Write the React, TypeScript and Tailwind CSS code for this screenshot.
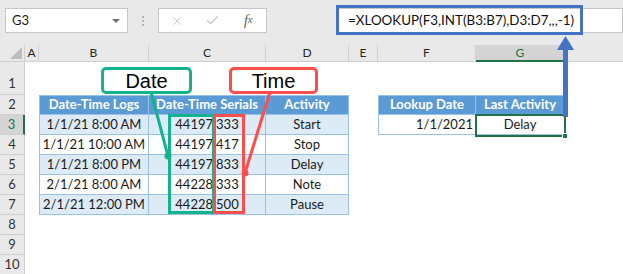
import { X, Check } from "lucide-react";

const logs = [
    ["1/1/21 8:00 AM", "44197.333", "Start"],
    ["1/1/21 10:00 AM", "44197.417", "Stop"],
    ["1/1/21 8:00 PM", "44197.833", "Delay"],
    ["2/1/21 8:00 AM", "44228.333", "Note"],
    ["2/1/21 12:00 PM", "44228.500", "Pause"],
];

const tblHead = "flex items-center justify-center border-r border-b border-t border-[#9bc2e6] bg-[#5b9bd5] font-bold text-white";
const tblCell = "flex items-center justify-center border-r border-b border-[#9bc2e6]";

function RowHead({ n, tall, active }: { n: number; tall?: boolean; active?: boolean }) {
    return (
        <div
            className={
                active
                    ? "flex w-[25px] shrink-0 items-center justify-center border-b border-r-2 border-b-[#cfcfcf] border-r-[#217346] bg-[#d4d4d4] text-[13px] text-[#217346]"
                    : tall
                    ? "flex w-[25px] shrink-0 items-end justify-center border-b border-r border-[#cfcfcf] bg-[#e9e9e9] pb-[1px] text-[13px] text-[#333]"
                    : "flex w-[25px] shrink-0 items-center justify-center border-b border-r border-[#cfcfcf] bg-[#e9e9e9] text-[13px] text-[#333]"
            }
        >
            {n}
        </div>
    );
}

export default function App() {
    return (
        <div className="relative h-[274px] w-[623px] overflow-hidden bg-white font-['Lato','Liberation_Sans',sans-serif] text-[#1a1a1a]">
            {/* Formula bar */}
            <div className="flex h-[45px] items-start bg-[#e9e9e9] pl-[5px] pt-[8px]">
                <div className="relative flex h-[25px] w-[123px] items-center border border-[#c6c6c6] bg-white pl-[6px] text-[13px]">
                    G3
                    <span className="absolute right-[7px] top-[10px] h-0 w-0 border-x-[4px] border-t-[4px] border-x-transparent border-t-[#707070]" />
                </div>
                <div className="flex h-[25px] w-[30px] flex-col items-center justify-center gap-[2px]">
                    <span className="h-[2px] w-[2px] bg-[#b3b3b3]" />
                    <span className="h-[2px] w-[2px] bg-[#b3b3b3]" />
                    <span className="h-[2px] w-[2px] bg-[#b3b3b3]" />
                </div>
                <div className="flex h-[25px] w-[109px] items-center border border-[#c6c6c6] bg-white">
                    <div className="flex w-[36px] justify-center">
                        <X className="h-[14px] w-[14px] text-[#c4c4c4]" strokeWidth={1.5} />
                    </div>
                    <div className="flex w-[36px] justify-center">
                        <Check className="h-[15px] w-[15px] text-[#c4c4c4]" strokeWidth={2} />
                    </div>
                    <div className="flex w-[36px] justify-center font-['Liberation_Serif',serif] text-[14px] italic text-[#5a5a5a]">
                        f<span className="text-[10px] leading-[20px]">x</span>
                    </div>
                </div>
                <div className="ml-[69px] flex h-[25px] flex-1 items-center border border-[#c6c6c6] bg-white pl-[11px] text-[13.4px] text-[#111]">
                    =XLOOKUP(F3,INT(B3:B7),D3:D7,,,-1)
                </div>
            </div>

            {/* Column headers */}
            <div className="flex h-[17px] bg-[#e9e9e9] text-[12px] text-[#262626]">
                <div className="relative w-[25px] shrink-0 border-r border-b border-[#cfcfcf]">
                    <span className="absolute bottom-[2px] right-[2px] h-0 w-0 border-b-[12px] border-l-[12px] border-b-[#bdbdbd] border-l-transparent" />
                </div>
                <div className="flex w-[14px] shrink-0 items-center justify-center border-r border-b border-[#cfcfcf]">A</div>
                <div className="flex w-[110px] shrink-0 items-center justify-center border-r border-b border-[#cfcfcf]">B</div>
                <div className="flex w-[117px] shrink-0 items-center justify-center border-r border-b border-[#cfcfcf]">C</div>
                <div className="flex w-[83px] shrink-0 items-center justify-center border-r border-b border-[#cfcfcf]">D</div>
                <div className="flex w-[29px] shrink-0 items-center justify-center border-r border-b border-[#cfcfcf]">E</div>
                <div className="flex w-[98px] shrink-0 items-center justify-center border-r border-b border-[#cfcfcf]">F</div>
                <div className="flex w-[89px] shrink-0 items-center justify-center border-r border-b-2 border-r-[#cfcfcf] border-b-[#217346] bg-[#d4d4d4] text-[#217346]">G</div>
                <div className="flex-1 border-b border-[#cfcfcf]" />
            </div>

            {/* Row 1 */}
            <div className="flex h-[33px]">
                <RowHead n={1} tall />
                <div className="flex-1" />
            </div>

            {/* Row 2: table headers */}
            <div className="flex h-[20px] text-[13px]">
                <RowHead n={2} />
                <div className="w-[14px] shrink-0" />
                <div className={`${tblHead} w-[110px] shrink-0 border-l`}>Date-Time Logs</div>
                <div className={`${tblHead} w-[117px] shrink-0`}>Date-Time Serials</div>
                <div className={`${tblHead} w-[83px] shrink-0`}>Activity</div>
                <div className="w-[29px] shrink-0" />
                <div className={`${tblHead} w-[98px] shrink-0 border-l`}>Lookup Date</div>
                <div className={`${tblHead} w-[89px] shrink-0`}>Last Activity</div>
            </div>

            {/* Rows 3-7 */}
            {logs.map((row, i) => (
                <div key={i} className="flex h-[20px] text-[13px]">
                    <RowHead n={i + 3} active={i === 0} />
                    <div className="w-[14px] shrink-0" />
                    <div className={`${tblCell} w-[110px] shrink-0 border-l ${i % 2 === 0 ? "bg-[#ddebf7]" : "bg-white"}`}>{row[0]}</div>
                    <div className={`${tblCell} w-[117px] shrink-0 ${i % 2 === 0 ? "bg-[#ddebf7]" : "bg-white"}`}>{row[1]}</div>
                    <div className={`${tblCell} w-[83px] shrink-0 ${i % 2 === 0 ? "bg-[#ddebf7]" : "bg-white"}`}>{row[2]}</div>
                    {i === 0 && (
                        <>
                            <div className="w-[29px] shrink-0" />
                            <div className={`${tblCell} w-[98px] shrink-0 justify-end border-l pr-[2px]`}>1/1/2021</div>
                            <div className={`${tblCell} w-[89px] shrink-0`}>Delay</div>
                        </>
                    )}
                </div>
            ))}

            {/* Rows 8-10 */}
            {[8, 9, 10].map((n) => (
                <div key={n} className="flex h-[20px]">
                    <RowHead n={n} />
                    <div className="flex-1" />
                </div>
            ))}

            {/* Annotations */}
            <svg className="pointer-events-none absolute left-0 top-0" width="623" height="274">
                <line x1="151" y1="92" x2="168" y2="156" stroke="#14b38f" strokeWidth="3" />
                <circle cx="168" cy="156" r="3.5" fill="#14b38f" />
                <line x1="270" y1="92" x2="245" y2="173" stroke="#fd4e4e" strokeWidth="3" />
                <circle cx="245" cy="173" r="3.5" fill="#fd4e4e" />
            </svg>

            <div className="absolute left-[168px] top-[114px] h-[100px] w-[47px] border-[3px] border-[#14b38f]" />
            <div className="absolute left-[213px] top-[114px] h-[100px] w-[32px] border-[3px] border-[#fd4e4e]" />

            <div className="absolute left-[101px] top-[67px] flex h-[27px] w-[91px] items-center justify-center rounded-[5px] border-[3px] border-[#14b38f] bg-white font-['Liberation_Sans',sans-serif] text-[20px] text-black">
                Date
            </div>
            <div className="absolute left-[229px] top-[67px] flex h-[27px] w-[89px] items-center justify-center rounded-[5px] border-[3px] border-[#fd4e4e] bg-white font-['Liberation_Sans',sans-serif] text-[20px] text-black">
                Time
            </div>

            {/* Selected cell G3 */}
            <div className="absolute left-[475px] top-[114px] h-[23px] w-[91px] border-2 border-[#217346]" />
            <div className="absolute left-[562px] top-[133px] h-[6px] w-[6px] border border-white bg-[#217346]" />

            {/* Formula highlight + arrow */}
            <div className="absolute left-[336px] top-[5px] h-[30px] w-[247px] border-[3px] border-[#4472c4]" />
            <svg className="pointer-events-none absolute left-0 top-0" width="623" height="274">
                <rect x="563" y="48" width="5" height="69" fill="#4472c4" />
                <polygon points="557,50 565.5,36 574,50" fill="#4472c4" />
            </svg>
        </div>
    );
}
